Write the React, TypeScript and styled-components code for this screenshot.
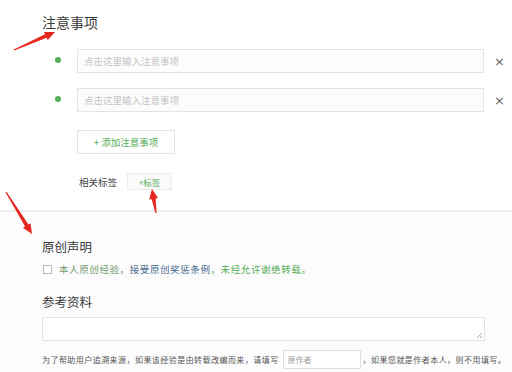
import React from "react";
import styled, { createGlobalStyle } from "styled-components";

const GlobalStyle = createGlobalStyle`
  html, body {
    margin: 0;
    padding: 0;
    background: #ffffff;
  }
  body {
    font-family: "Noto Sans CJK SC", "Noto Sans", sans-serif;
    color: #333;
  }
`;

const green = "#55ad57";

const Page = styled.div`
  position: relative;
  width: 512px;
  height: 372px;
  overflow: hidden;
  background: #fff;
`;

const TopSection = styled.section`
  padding: 12px 0 0 42px;
  height: 210px;
  box-sizing: border-box;
  background: #fff;
`;

const Title = styled.h2`
  margin: 0;
  font-size: 14px;
  line-height: 20px;
  font-weight: 400;
  color: #3a3a3a;
`;

const ItemList = styled.div`
  margin-top: 17px;
  display: flex;
  flex-direction: column;
  gap: 15px;
`;

const ItemRow = styled.div`
  display: flex;
  align-items: center;
  padding-left: 13px;
`;

const Dot = styled.span`
  width: 6px;
  height: 6px;
  border-radius: 50%;
  background: ${green};
  margin-right: 16px;
  margin-top: -2px;
`;

const ItemInput = styled.input`
  width: 407px;
  height: 24px;
  box-sizing: border-box;
  border: 1px solid #e4e4e4;
  background: #fdfcfd;
  padding: 0 6px;
  font-family: inherit;
  font-size: 9.5px;
  outline: none;
  &::placeholder {
    color: #c4c4c4;
  }
`;

const Remove = styled.span`
  margin-left: 10px;
  font-size: 13px;
  line-height: 1;
  color: #666;
  font-family: "DejaVu Sans", sans-serif;
`;

const AddButton = styled.button`
  margin: 18px 0 0 35px;
  width: 98px;
  height: 24px;
  border: 1px solid #dfe6df;
  background: #fff;
  color: ${green};
  font-family: inherit;
  font-size: 9.5px;
  padding: 0;
  cursor: pointer;
`;

const TagRow = styled.div`
  display: flex;
  align-items: center;
  gap: 10px;
  margin: 19px 0 0 37px;
`;

const TagLabel = styled.span`
  font-size: 9.5px;
  color: #444;
`;

const TagButton = styled.button`
  width: 45px;
  height: 17px;
  border: 1px solid #ececec;
  background: #fafafa;
  color: ${green};
  font-family: inherit;
  font-size: 8.5px;
  padding: 0;
`;

const BottomSection = styled.section`
  border-top: 2px solid #efeeef;
  background: #fdfcfd;
  height: 162px;
  box-sizing: border-box;
  padding: 26px 0 0 42px;
`;

const SectionTitle = styled.h3<{ $gap?: number }>`
  margin: ${(p) => p.$gap ?? 0}px 0 0;
  font-size: 12.5px;
  line-height: 18px;
  font-weight: 400;
  color: #3a3a3a;
`;

const CheckRow = styled.label`
  display: flex;
  align-items: center;
  margin-top: 6px;
  font-size: 9.5px;
  letter-spacing: 0.6px;
`;

const Box = styled.span`
  width: 7px;
  height: 7px;
  border: 1px solid #b8b8b8;
  background: #fff;
  margin: 0 7px 0 1px;
`;

const Muted = styled.span<{ $soft?: boolean }>`
  color: ${(p) => (p.$soft ? "#6f9a6c" : green)};
`;

const Link = styled.span`
  color: #3f6a8c;
`;

const RefArea = styled.div`
  position: relative;
  margin-top: 6px;
  width: 443px;
  height: 24px;
  box-sizing: border-box;
  border: 1px solid #e2e2e2;
  background: #fff;
`;

const Grip = styled.svg`
  position: absolute;
  right: 1px;
  bottom: 1px;
`;

const SourceRow = styled.div`
  display: flex;
  align-items: center;
  margin-top: 9px;
  font-size: 8px;
  letter-spacing: 0.45px;
  color: #555;
  white-space: nowrap;
`;

const AuthorInput = styled.input`
  width: 78px;
  height: 19px;
  box-sizing: border-box;
  margin: 0 2px 0 4px;
  border: 1px solid #e0e0e0;
  background: #fff;
  padding: 0 4px;
  font-family: inherit;
  font-size: 8px;
  outline: none;
  &::placeholder {
    color: #999;
  }
`;

const Overlay = styled.svg`
  position: absolute;
  left: 0;
  top: 0;
  pointer-events: none;
`;

type Pt = [number, number];

const arrows: { tail: Pt; tip: Pt }[] = [
  { tail: [14, 50], tip: [55, 32] },
  { tail: [156, 213], tip: [152, 189] },
  { tail: [6, 192], tip: [32, 234] },
];

function arrowPoints(tail: Pt, tip: Pt) {
  const dx = tip[0] - tail[0];
  const dy = tip[1] - tail[1];
  const len = Math.hypot(dx, dy);
  const ux = dx / len;
  const uy = dy / len;
  const nx = -uy;
  const ny = ux;
  const headLen = 10;
  const bx = tip[0] - ux * headLen;
  const by = tip[1] - uy * headLen;
  const p = (x: number, y: number, w: number) => `${x + nx * w},${y + ny * w}`;
  return [
    p(tail[0], tail[1], 0.6),
    p(bx, by, 2),
    p(bx, by, 4.5),
    `${tip[0]},${tip[1]}`,
    p(bx, by, -4.5),
    p(bx, by, -2),
    p(tail[0], tail[1], -0.6),
  ].join(" ");
}

export default function App() {
  return (
    <Page>
      <GlobalStyle />
      <TopSection>
        <Title>注意事项</Title>
        <ItemList>
          {[0, 1].map((i) => (
            <ItemRow key={i}>
              <Dot />
              <ItemInput placeholder="点击这里输入注意事项" />
              <Remove>×</Remove>
            </ItemRow>
          ))}
        </ItemList>
        <AddButton>+ 添加注意事项</AddButton>
        <TagRow>
          <TagLabel>相关标签</TagLabel>
          <TagButton>+标签</TagButton>
        </TagRow>
      </TopSection>
      <BottomSection>
        <SectionTitle>原创声明</SectionTitle>
        <CheckRow>
          <Box />
          <Muted $soft>本人原创经验，</Muted>
          <Link>接受原创奖惩条例</Link>
          <Muted>，未经允许谢绝转载。</Muted>
        </CheckRow>
        <SectionTitle $gap={17}>参考资料</SectionTitle>
        <RefArea>
          <Grip width="8" height="8" viewBox="0 0 8 8">
            <path d="M7 2 L2 7 M7 5 L5 7" stroke="#aaa" strokeWidth="1" />
          </Grip>
        </RefArea>
        <SourceRow>
          为了帮助用户追溯来源，如果该经验是由转载改编而来，请填写
          <AuthorInput placeholder="原作者" />
          ，如果您就是作者本人，则不用填写。
        </SourceRow>
      </BottomSection>
      <Overlay width="512" height="372" viewBox="0 0 512 372">
        {arrows.map((a, i) => (
          <polygon key={i} points={arrowPoints(a.tail, a.tip)} fill="#e5281d" />
        ))}
      </Overlay>
    </Page>
  );
}
